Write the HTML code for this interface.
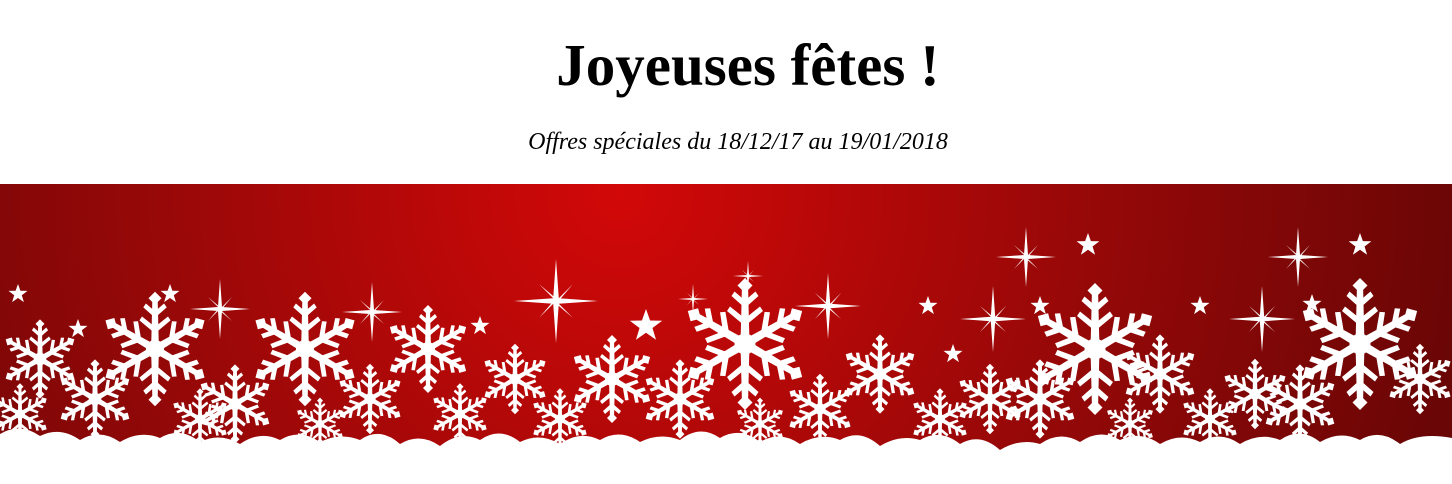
<!DOCTYPE html>
<html><head><meta charset="utf-8"><style>
html,body{margin:0;padding:0;background:#fff;width:1452px;height:484px;overflow:hidden}
h1{position:absolute;left:0;width:1496px;top:30px;margin:0;text-align:center;font:bold 59px "Liberation Serif",serif;color:#000;line-height:70px}
p{position:absolute;left:0;width:1476px;top:129px;margin:0;text-align:center;font:italic 24px "Liberation Serif",serif;color:#000}
svg{position:absolute;left:0;top:184px}
</style></head><body>
<h1>Joyeuses fêtes !</h1>
<p>Offres spéciales du 18/12/17 au 19/01/2018</p>
<svg width="1452" height="300" viewBox="0 0 1452 300">
<defs>
<radialGradient id="g" cx="620" cy="10" r="850" gradientUnits="userSpaceOnUse">
<stop offset="0" stop-color="#d20808"/><stop offset="0.5" stop-color="#9c0808"/><stop offset="1" stop-color="#6a0606"/></radialGradient>
<g id="arm"><path d="M-3 0 L3 0 L2 -40 L-2 -40Z"/><path d="M0 -12 L-12 -22 L-10 -25 L0 -17 L10 -25 L12 -22Z"/><path d="M0 -24 L-9 -32 L-7 -35 L0 -29 L7 -35 L9 -32Z"/><path d="M0 -34 L-5 -39 L0 -44 L5 -39Z"/></g>
<g id="f"><use href="#arm"/><use href="#arm" transform="rotate(60)"/><use href="#arm" transform="rotate(120)"/><use href="#arm" transform="rotate(180)"/><use href="#arm" transform="rotate(240)"/><use href="#arm" transform="rotate(300)"/><circle r="7"/></g>
<path id="s" d="M0 -10 L2.4 -3.2 L9.5 -3.1 L3.8 1.2 L5.9 8.1 L0 4 L-5.9 8.1 L-3.8 1.2 L-9.5 -3.1 L-2.4 -3.2Z"/>
<path id="sp" d="M0 -30 L2 -2 L30 0 L2 2 L0 30 L-2 2 L-30 0 L-2 -2Z M-12 -12 L1 -1 L12 -12 L1 1 L12 12 L-1 1 L-12 12 L-1 -1Z"/>
</defs>
<rect width="1452" height="300" fill="url(#g)"/>
<g fill="#fff">
<use href="#f" transform="translate(40 175) scale(0.9)"/>
<use href="#f" transform="translate(155 165) scale(1.3)"/>
<use href="#f" transform="translate(305 165) scale(1.3)"/>
<use href="#f" transform="translate(428 165) scale(1.0)"/>
<use href="#f" transform="translate(515 195) scale(0.8)"/>
<use href="#f" transform="translate(612 195) scale(1.0)"/>
<use href="#f" transform="translate(745 160) scale(1.5)"/>
<use href="#f" transform="translate(880 190) scale(0.9)"/>
<use href="#f" transform="translate(990 215) scale(0.8)"/>
<use href="#f" transform="translate(1095 165) scale(1.5)"/>
<use href="#f" transform="translate(1160 190) scale(0.9)"/>
<use href="#f" transform="translate(1255 210) scale(0.8)"/>
<use href="#f" transform="translate(1360 160) scale(1.5)"/>
<use href="#f" transform="translate(1420 195) scale(0.8)"/>
<use href="#f" transform="translate(95 215) scale(0.9)"/>
<use href="#f" transform="translate(235 220) scale(0.9)"/>
<use href="#f" transform="translate(370 215) scale(0.8)"/>
<use href="#f" transform="translate(680 215) scale(0.9)"/>
<use href="#f" transform="translate(820 225) scale(0.8)"/>
<use href="#f" transform="translate(1040 215) scale(0.9)"/>
<use href="#f" transform="translate(1300 220) scale(0.9)"/>
<use href="#f" transform="translate(20 230) scale(0.7)"/>
<use href="#f" transform="translate(200 235) scale(0.7)"/>
<use href="#f" transform="translate(460 230) scale(0.7)"/>
<use href="#f" transform="translate(560 235) scale(0.7)"/>
<use href="#f" transform="translate(940 235) scale(0.7)"/>
<use href="#f" transform="translate(1210 235) scale(0.7)"/>
<use href="#f" transform="translate(320 240) scale(0.6)"/>
<use href="#f" transform="translate(760 240) scale(0.6)"/>
<use href="#f" transform="translate(1130 240) scale(0.6)"/>
<use href="#s" transform="translate(18 110)"/><use href="#s" transform="translate(170 110)"/><use href="#s" transform="translate(78 145)"/>
<use href="#s" transform="translate(480 142)"/><use href="#s" transform="translate(646 142) scale(1.7)"/><use href="#s" transform="translate(928 122)"/>
<use href="#s" transform="translate(1088 61) scale(1.2)"/><use href="#s" transform="translate(1040 122)"/><use href="#s" transform="translate(1200 122)"/>
<use href="#s" transform="translate(1360 61) scale(1.2)"/><use href="#s" transform="translate(1312 120)"/><use href="#s" transform="translate(953 170)"/>
<use href="#sp" transform="translate(220 125) scale(1)"/><use href="#sp" transform="translate(372 128) scale(1)"/>
<use href="#sp" transform="translate(556 117) scale(1.4)"/><use href="#sp" transform="translate(693 115) scale(0.5)"/>
<use href="#sp" transform="translate(748 92) scale(0.5)"/><use href="#sp" transform="translate(828 122) scale(1.1)"/>
<use href="#sp" transform="translate(993 135) scale(1.1)"/><use href="#sp" transform="translate(1026 73) scale(1)"/>
<use href="#sp" transform="translate(1262 135) scale(1.1)"/><use href="#sp" transform="translate(1298 73) scale(1)"/>
<path transform="translate(0 10)" d="M0 240 Q20 228 40 242 Q60 232 80 246 Q100 234 120 248 Q140 236 160 244 Q180 232 200 248 Q220 238 240 250 Q260 236 280 246 Q300 234 320 248 Q340 238 360 246 Q380 232 400 250 Q420 238 440 252 Q460 236 480 246 Q500 232 520 248 Q540 238 560 250 Q580 236 600 246 Q620 234 640 248 Q660 238 680 246 Q700 230 720 244 Q740 232 760 248 Q780 236 800 250 Q820 238 840 246 Q860 234 880 252 Q900 240 920 246 Q940 234 960 250 Q980 238 1000 256 Q1020 244 1040 250 Q1060 236 1080 248 Q1100 234 1120 246 Q1140 236 1160 250 Q1180 238 1200 248 Q1220 236 1240 250 Q1260 238 1280 246 Q1300 232 1320 248 Q1340 236 1360 246 Q1380 234 1400 250 Q1420 238 1452 244 L1452 300 L0 300Z"/>
</g>
</svg>
</body></html>
